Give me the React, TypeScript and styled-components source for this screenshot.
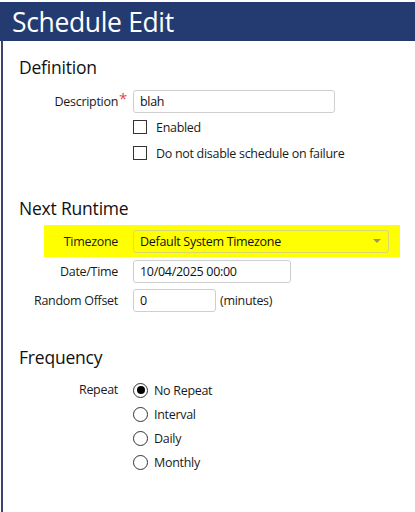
import React from 'react';
import styled, { createGlobalStyle } from 'styled-components';

const GlobalStyle = createGlobalStyle`
  html, body {
    margin: 0;
    padding: 0;
    background: #ffffff;
  }
  body {
    font-family: 'Open Sans', 'Noto Sans', sans-serif;
    color: #1a1a1a;
  }
`;

const Page = styled.div`
  width: 415px;
  height: 512px;
  padding-top: 2px;
  box-sizing: border-box;
  display: flex;
  flex-direction: column;
  overflow: hidden;
`;

const Header = styled.div`
  height: 39px;
  flex-shrink: 0;
  background: #243b72;
  display: flex;
  align-items: center;
  padding-left: 12px;

  h1 {
    margin: 0;
    font-weight: 400;
    font-size: 26.5px;
    letter-spacing: -0.35px;
    color: #ffffff;
  }
`;

const Body = styled.div`
  flex: 1;
  margin-left: 1px;
  border-left: 2px solid #39456a;
  padding: 13px 0 0 16px;
`;

const Section = styled.section`
  display: flex;
  flex-direction: column;
  margin-bottom: 29px;
`;

const SectionTitle = styled.h2<{ $gap: number }>`
  margin: 0 0 ${(p) => p.$gap}px;
  font-size: 17.5px;
  font-weight: 400;
  line-height: 26px;
  letter-spacing: -0.2px;
  color: #111;
`;

const Row = styled.div<{ $highlight?: boolean; $height?: number }>`
  display: flex;
  align-items: center;
  height: ${(p) => p.$height ?? 29}px;
  margin-left: ${(p) => (p.$highlight ? 25 : 0)}px;
  width: ${(p) => (p.$highlight ? '356px' : 'auto')};
  background: ${(p) => (p.$highlight ? '#ffff00' : 'transparent')};
  font-size: 12.5px;
`;

const Label = styled.div<{ $width?: number }>`
  width: ${(p) => p.$width ?? 99}px;
  flex-shrink: 0;
  display: flex;
  justify-content: flex-end;
  white-space: nowrap;
  margin-right: 15px;
  letter-spacing: -0.3px;
  color: #1a1a1a;
`;

const Required = styled.span`
  color: #e0474c;
  font-size: 15px;
  line-height: 10px;
  margin-left: 1px;
  margin-right: -9px;
`;

const TextInput = styled.div<{ $width: number }>`
  width: ${(p) => p.$width}px;
  height: 23px;
  box-sizing: border-box;
  border: 1px solid #cfcfcf;
  border-radius: 3px;
  background: #ffffff;
  padding: 0 6px;
  display: flex;
  align-items: center;
  font-size: 12.5px;
  letter-spacing: -0.3px;
  color: #111;
`;

const Select = styled(TextInput)`
  background: transparent;
  border-color: #d8d870;
  justify-content: space-between;
  padding-right: 7px;
`;

const Caret = styled.span`
  width: 0;
  height: 0;
  border-left: 4px solid transparent;
  border-right: 4px solid transparent;
  border-top: 4px solid #9a9a60;
`;

const Check = styled.span`
  width: 14px;
  height: 14px;
  box-sizing: border-box;
  border: 1px solid #333;
  background: #fff;
  margin-right: 9px;
`;

const Radio = styled.span<{ $checked?: boolean }>`
  width: 15px;
  height: 15px;
  box-sizing: border-box;
  border: 1px solid #333;
  border-radius: 50%;
  background: #fff;
  margin-right: 6px;
  display: flex;
  align-items: center;
  justify-content: center;

  &::after {
    content: '';
    display: ${(p) => (p.$checked ? 'block' : 'none')};
    width: 8px;
    height: 8px;
    border-radius: 50%;
    background: #000;
  }
`;

const OptionText = styled.span`
  letter-spacing: -0.3px;
`;

const Suffix = styled.span`
  margin-left: 4px;
  letter-spacing: -0.3px;
`;

const RadioGroup = styled.div`
  display: flex;
  flex-direction: column;
`;

const RadioRow = styled.div`
  display: flex;
  align-items: center;
  height: 24px;
`;

const TopRow = styled(Row)`
  align-items: flex-start;
`;

const TopLabel = styled(Label)`
  line-height: 24px;
`;

const repeatOptions = ['No Repeat', 'Interval', 'Daily', 'Monthly'];

export default function App() {
  return (
    <Page>
      <GlobalStyle />
      <Header>
        <h1>Schedule Edit</h1>
      </Header>
      <Body>
        <Section>
          <SectionTitle $gap={9}>Definition</SectionTitle>
          <Row $height={25}>
            <Label>
              Description<Required>*</Required>
            </Label>
            <TextInput $width={202}>blah</TextInput>
          </Row>
          <Row $height={26}>
            <Label />
            <Check />
            <OptionText>Enabled</OptionText>
          </Row>
          <Row $height={26}>
            <Label />
            <Check />
            <OptionText>Do not disable schedule on failure</OptionText>
          </Row>
        </Section>

        <Section>
          <SectionTitle $gap={4}>Next Runtime</SectionTitle>
          <Row $highlight $height={32}>
            <Label $width={74}>Timezone</Label>
            <Select $width={256}>
              <span>Default System Timezone</span>
              <Caret />
            </Select>
          </Row>
          <Row>
            <Label>Date/Time</Label>
            <TextInput $width={158}>10/04/2025 00:00</TextInput>
          </Row>
          <Row>
            <Label>Random Offset</Label>
            <TextInput $width={83}>0</TextInput>
            <Suffix>(minutes)</Suffix>
          </Row>
        </Section>

        <Section>
          <SectionTitle $gap={8}>Frequency</SectionTitle>
          <TopRow $height={96}>
            <TopLabel>Repeat</TopLabel>
            <RadioGroup>
              {repeatOptions.map((o, i) => (
                <RadioRow key={o}>
                  <Radio $checked={i === 0} />
                  <OptionText>{o}</OptionText>
                </RadioRow>
              ))}
            </RadioGroup>
          </TopRow>
        </Section>
      </Body>
    </Page>
  );
}
